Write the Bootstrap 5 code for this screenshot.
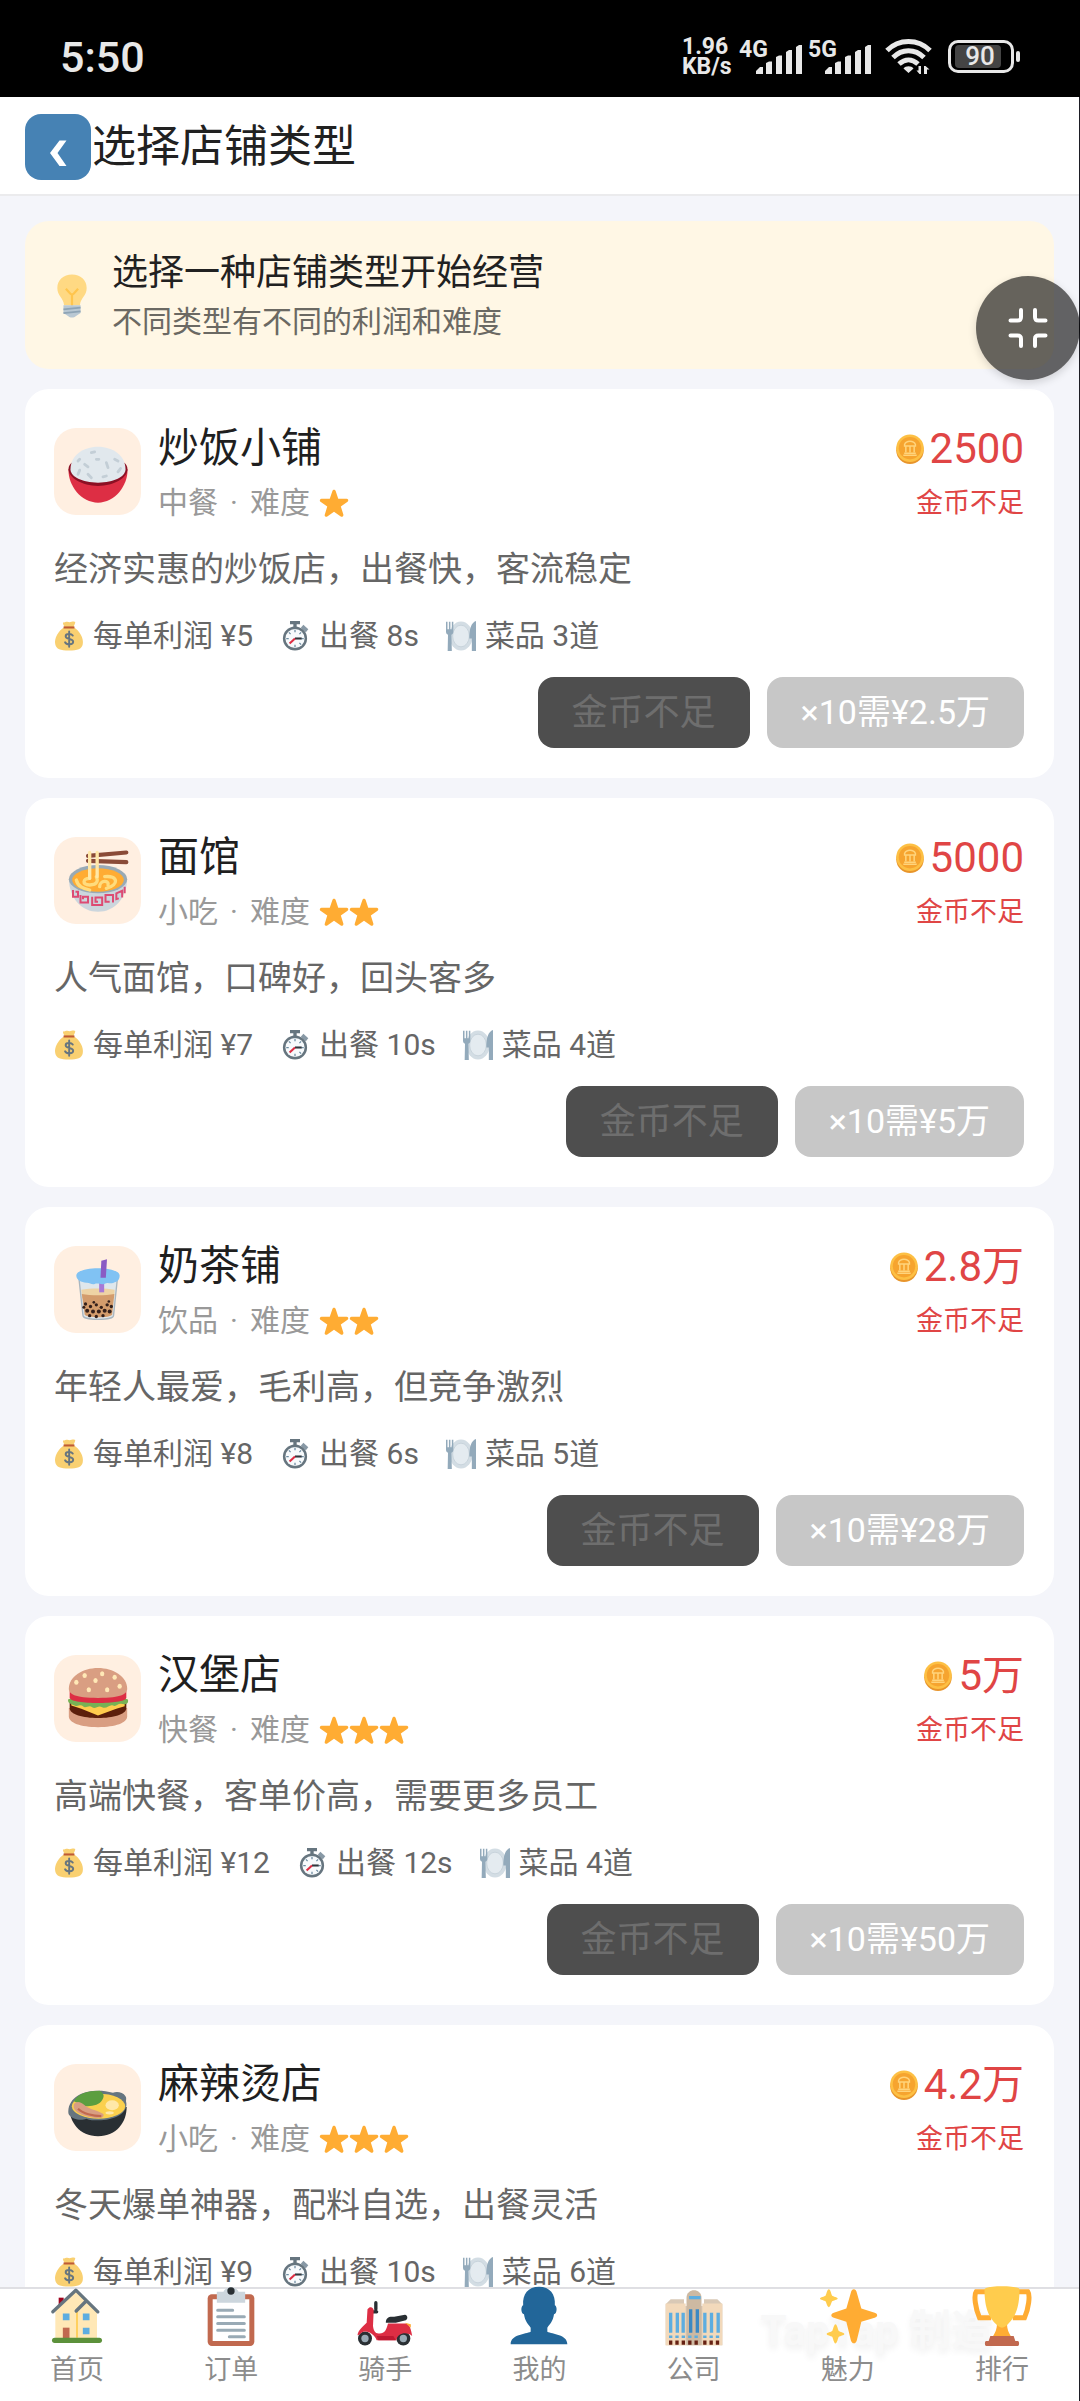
<!DOCTYPE html>
<html lang="zh-CN">
<head>
<meta charset="utf-8">
<meta name="viewport" content="width=device-width, initial-scale=1">
<title>选择店铺类型</title>
<link rel="stylesheet" href="https://cdn.jsdelivr.net/npm/bootstrap@5.3.0/dist/css/bootstrap.min.css">
<style>
  body { font-family: Roboto, "Noto Sans CJK SC", sans-serif; background: #f4f5fa; color: #212121; }
  .app-shell { overflow: hidden; }
  .app-body { border-right: 1px solid #1d1d24; min-height: 0; }
  .status-strip { height: 97px; background: #000; color: #e8e8e8; padding: 16px 60px 0; flex: none; }
  .clock { font-size: 43px; line-height: 48px; font-weight: 500; }
  .net-speed { font-size: 23px; line-height: 20px; font-weight: 700; width: 57px; }
  .net-kind { font-size: 23px; line-height: 22px; font-weight: 700; height: 36px; }
  .bars-icon { margin-left: -12px; width: 46px; height: 29px; margin-top: 6px; }
  .sig { width: 69px; }
  .battery-box { width: 66px; height: 33px; border: 3px solid #e8e8e8; border-radius: 10px; padding: 2px 10px 2px 4px; }
  .battery-fill { background: #444; border-radius: 4px; font-size: 26px; line-height: 23px; font-weight: 500; padding-left: 4px; }
  .battery-tip { width: 4px; height: 11px; background: #e8e8e8; border-radius: 2px; margin-left: 2px; }
  .title-bar { background: #fff; height: 99px; border-bottom: 2px solid #ebebed; padding: 3px 25px 0; flex: none; }
  .back-btn { width: 66px; height: 66px; border-radius: 16px; background: #4682b4; border: 0; padding: 0; }
  .page-title { font-size: 44px; line-height: 60px; font-weight: 400; margin: 0 0 0 1px; }
  .scroll-area { overflow-y: auto; scrollbar-width: none; padding: 25px 25px 20px; gap: 20px; min-height: 0; }
  .scroll-area::-webkit-scrollbar { display: none; }
  .tip-box { background: #fff7e5; border-radius: 24px; padding: 27px 25px 25px; gap: 18px; flex: none; }
  .tip-head { font-size: 36px; line-height: 50px; font-weight: 400; margin: 0 0 2px; }
  .tip-sub { font-size: 30px; line-height: 44px; color: #6b6963; margin: 0; }
  .shop { background: #fff; border-radius: 24px; padding: 30px 30px 30px 29px; flex: none; }
  .shop-icon { width: 87px; height: 87px; border-radius: 22px; background: #ffefe1; flex: none; }
  .shop-head { gap: 17px; }
  .shop-name { font-size: 41px; line-height: 58px; font-weight: 400; margin: 0 0 6px; color: #1f1f1f; }
  .shop-meta { font-size: 30px; line-height: 40px; color: #999; margin: 0; }
  .meta-dot { width: 32px; text-align: center; }
  .stars { margin-left: 9px; }
  .price { font-size: 42px; line-height: 60px; color: #e04545; gap: 5px; margin-bottom: 4px; }
  .short { font-size: 27px; line-height: 40px; color: #e04545; }
  .shop-desc { font-size: 34px; line-height: 44px; color: #666; margin: 24px 0 25px; }
  .stats { font-size: 30px; line-height: 40px; color: #666; gap: 27px; margin: 0 0 21px; padding: 0; list-style: none; }
  .stats li { gap: 9px; }
  .buttons { gap: 17px; }
  .buy { height: 71px; border: 0; border-radius: 16px; padding: 0 34px; }
  .buy-one { font-size: 36px; background: #4e4e4e; color: #6e6e6e; }
  .buy-ten { font-size: 34px; background: #c7c7c7; color: #fff; }
  .float-btn { position: absolute; right: 0; top: 276px; width: 104px; height: 104px; border: 0; border-radius: 50%; background: rgba(0,0,0,.6); box-shadow: 0 3px 8px rgba(0,0,0,.15); padding: 0; z-index: 5; }
  .tabs-bar { background: #fff; border-top: 2px solid #dfdfe3; height: 114px; flex: none; position: relative; }
  .tabs-bar a { flex: 1 1 0; color: #8c8c8c; font-size: 27px; line-height: 36px; text-decoration: none; position: relative; }
  .tabs-bar svg { margin-top: -3px; margin-bottom: 6px; }
  .stamp { position: absolute; right: 86px; top: 22px; font-size: 42px; line-height: 40px; font-weight: 700; color: #f8f8f8; text-shadow: 0 4px 7px #efefef; white-space: nowrap; }
  svg { flex: none; display: block; }
</style>
</head>
<body>
<svg width="0" height="0" class="position-absolute" aria-hidden="true">
  <symbol id="star" viewBox="0 0 36 36"><path fill="#ffac33" d="M27.3 34.6c-.4 0-.8-.1-1.200-.4L18 28.400l-8.100 5.800c-.7.500-1.600.500-2.300 0-.7-.5-1-1.400-.7-2.200l3-9.800-8.100-5.700c-.7-.5-1-1.400-.7-2.200.3-.8 1-1.300 1.900-1.300h9.900l3.300-9.600C16.400 2.600 17.200 2 18 2s1.600.5 1.900 1.300l3.200 9.600h10c.9 0 1.600.5 1.900 1.300.3.800 0 1.700-.7 2.200l-8.100 5.700 3 9.800c.3.800 0 1.700-.7 2.200-.4.400-.8.500-1.200.500z"/></symbol>
  <symbol id="coin" viewBox="0 0 36 36"><ellipse cx="18" cy="19.500" rx="16.500" ry="16.500" fill="#e8952b"/><ellipse cx="18" cy="17" rx="16.500" ry="16.500" fill="#fdc044"/><circle cx="18" cy="17" r="13.500" fill="#f6a42f"/><path d="M11.500 12.500c2-5 11-5 13 0v2h-13zM11 23h14M10 25.500h16M13 15v7M18 15v7M23 15v7" fill="none" stroke="#ffd47c" stroke-width="1.800"/></symbol>
  <symbol id="bag" viewBox="0 0 36 36"><path fill="#f9d071" d="M11 1.500c2 1 3-1 5-.5s3 .7 5 0 4-.7 4.500.3c0 2-1.500 4-2 6C31 12 36 21 34.500 28c-1.300 6-6 7.500-16.500 7.500S2.800 34 1.500 28C0 21 5 12 12.500 7.300 12 5 10 3 11 1.500z"/><path fill="#be5b35" d="M11.500 6.500h13v2.500h-13z"/><path d="M22.500 17.500c-1.500-2.500-8.500-3-8.500.7 0 4.300 9 2.300 9 6.800 0 4-8 3.800-9.700.5M18.200 12.500V31" fill="none" stroke="#67757f" stroke-width="2.300" stroke-linecap="round"/></symbol>
  <symbol id="watch" viewBox="0 0 36 36"><path fill="#66757f" d="M12 0h12v4H12zM16 3h4v5h-4z"/><path fill="#8899a6" d="M28 4.500L34 10l-3 3.500-6-5.500z"/><circle cx="18" cy="21" r="14.500" fill="#66757f"/><circle cx="18" cy="21" r="11.500" fill="#f7fafc"/><path d="M18 10.500v3M18 28.500v3M7.500 21h3M25.500 21h3M10.700 13.700l2 2M25.300 28.300l-2-2M25.300 13.700l-2 2" stroke="#6b8aa0" stroke-width="1.500"/><path d="M18 21h8" stroke="#31373d" stroke-width="2.500"/><path d="M18 21l-6.500 6" stroke="#dd2e44" stroke-width="2.500"/></symbol>
  <symbol id="plate" viewBox="0 0 36 36"><ellipse cx="18" cy="18" rx="14" ry="17.500" fill="#d3dde4"/><ellipse cx="18" cy="18" rx="10" ry="13" fill="#e4ebf0" stroke="#c4d0d9"/><path fill="#93aabb" d="M0 1h1.800v9H3.500V1h1.800v9H7V1h1.800v12c0 2-1 3-2.300 3.500L7 36H2l.4-19.500C1 16 0 15 0 13z"/><path fill="#93aabb" d="M36 0v36h-5V21h-3C28 10 30 2 36 0z"/></symbol>
  <symbol id="bulb" viewBox="0 0 36 36"><path fill="#ffd983" d="M30 11.500C30 5 25 .5 18 .5S6 5 6 11.500c0 6.500 5 8 5.500 14h13C25 19.500 30 18 30 11.500z"/><path d="M13 12l3.500 4c1 1 2 1 3 0l3.500-4M18 16.500V26" fill="none" stroke="#ffc54d" stroke-width="1.800"/><path fill="#b9c8d3" d="M11 25.500h14v6.500l-4 2.500c-1 1.500-5 1.500-6 0L11 32z"/><path d="M11 29l14-1.500M11 32l14-1.500" stroke="#8ea4b5" stroke-width="1.400"/></symbol>
</svg>

<div class="app-shell d-flex flex-column vh-100 position-relative">
  <div class="status-strip d-flex justify-content-between align-items-center">
    <div class="clock">5:50</div>
    <div class="d-flex align-items-center">
      <div class="net-speed">1.96<br>KB/s</div>
      <div class="sig d-flex align-items-start"><span class="net-kind">4G</span>
        <svg class="bars-icon" viewBox="0 0 46 29" fill="#e8e8e8"><path d="M0 29v-3l4-4h3v7zM10 29V18l3-1.500h3V29zM20 29V12l3-1.500h3V29zM30 29V7l3-2h3v24zM40 29V2l3-2h3v29z"/></svg></div>
      <div class="sig d-flex align-items-start"><span class="net-kind">5G</span>
        <svg class="bars-icon" viewBox="0 0 46 29" fill="#e8e8e8"><path d="M0 29v-3l4-4h3v7zM10 29V18l3-1.500h3V29zM20 29V12l3-1.500h3V29zM30 29V7l3-2h3v24zM40 29V2l3-2h3v29z"/></svg></div>
      <svg class="ms-2 me-3" width="47" height="37" viewBox="0 0 47 37"><g fill="none" stroke="#e8e8e8" stroke-width="5"><path d="M2 12.500C14 .5 33 .5 45 12.500"/><path d="M8 19.500c9-9 22-9 31 0"/><path d="M14 26c6-5.500 13-5.500 19 0"/></g><path fill="#e8e8e8" d="M23.500 35l-5-4.500c2-3 8-3 10 0zM36 28v8h-1.500l-3-3.500h2V28zM39 36v-8h1.500l4 3.500h-2.500V36z"/></svg>
      <div class="battery-box"><div class="battery-fill text-center">90</div></div><div class="battery-tip"></div>
    </div>
  </div>

  <div class="app-body d-flex flex-column flex-grow-1">
    <header class="title-bar d-flex align-items-center">
      <button type="button" class="back-btn d-flex align-items-center justify-content-center" aria-label="返回">
        <svg width="66" height="66" viewBox="0 0 66 66"><path d="M25 39l9.500-12.500h7L32.500 39l9 13h-7z" fill="#fff"/></svg>
      </button>
      <h1 class="page-title">选择店铺类型</h1>
    </header>

    <main class="scroll-area d-flex flex-column flex-grow-1">
      <section class="tip-box d-flex align-items-center">
        <svg width="44" height="44"><use href="#bulb"/></svg>
        <div><h2 class="tip-head">选择一种店铺类型开始经营</h2><p class="tip-sub">不同类型有不同的利润和难度</p></div>
      </section>

      <article class="shop">
        <div class="shop-head d-flex align-items-center">
          <div class="shop-icon d-flex align-items-center justify-content-center">
            <svg width="60" height="60" viewBox="0 0 36 36" overflow="visible"><path fill="#dd2e44" d="M.3 17C0 27 8 37 18 37s18-10 17.700-20z"/><path fill="#8c1024" d="M.3 17c0-2 1-3.500 2-4h31.400c1 .5 2 2 2 4 0 5-8 10-17.700 10S.3 22 .3 17z"/><path fill="#e1e8ed" d="M1.500 17C1.500 9 9 3.500 18 3.500S34.500 9 34.500 17c0 4.500-7 8-16.500 8s-16.500-3.500-16.500-8z"/><path d="M7 11l-1 1M17 11h1.500M10 14l2 1.500M23 13l1 3M28 11l2 1M6 20l1-2.500M12 20l2 2M21 21.500l2-.5M30 18.500l1.500-2M14 7l2-.5" stroke="#c3ced6" stroke-width="1.700" stroke-linecap="round"/></svg>
          </div>
          <div class="flex-grow-1"><h3 class="shop-name">炒饭小铺</h3>
            <p class="shop-meta d-flex align-items-center"><span>中餐</span><span class="meta-dot">·</span><span>难度</span><span class="stars d-flex" role="img" aria-label="1星"><svg width="30" height="30"><use href="#star"/></svg></span></p></div>
          <div class="text-end"><div class="price d-flex align-items-center justify-content-end"><svg width="30" height="30"><use href="#coin"/></svg><span>2500</span></div><div class="short">金币不足</div></div>
        </div>
        <p class="shop-desc">经济实惠的炒饭店，出餐快，客流稳定</p>
        <ul class="stats d-flex"><li class="d-flex align-items-center"><svg width="30" height="30"><use href="#bag"/></svg>每单利润 ¥5</li><li class="d-flex align-items-center"><svg width="30" height="30"><use href="#watch"/></svg>出餐 8s</li><li class="d-flex align-items-center"><svg width="30" height="30"><use href="#plate"/></svg>菜品 3道</li></ul>
        <div class="buttons d-flex justify-content-end"><button type="button" class="buy buy-one">金币不足</button><button type="button" class="buy buy-ten">×10需¥2.5万</button></div>
      </article>

      <article class="shop">
        <div class="shop-head d-flex align-items-center">
          <div class="shop-icon d-flex align-items-center justify-content-center">
            <svg width="60" height="60" viewBox="0 0 36 36" overflow="visible"><path fill="#ccd6dd" d="M.5 17.500C1 29 8 37 18 37s17-8 17.500-19.500z"/><ellipse cx="18" cy="17.500" rx="17.500" ry="8.500" fill="#99aab5"/><ellipse cx="18" cy="18" rx="15.500" ry="7" fill="#ffac33"/><g fill="none" stroke="#ffdc7d" stroke-width="2" stroke-linecap="round"><path d="M13 17c-4 0-5 4 0 4s5-3 4-5M5 18c1 4 4 5 8 6M19 22c0-4 6-4 5-1M22 16c8-1 9 5 1 7"/></g><g stroke="#8a4b38" stroke-width="2.500" stroke-linecap="round"><path d="M12 3.500l23-2M12 6.500l23 .8"/></g><path d="M13 1.500V17M17.500 1.500V16" stroke="#ffe8a8" stroke-width="2" stroke-linecap="round"/><g fill="none" stroke="#dd4b73" stroke-width="1.200"><path d="M3 24v4h3v-3H4.500M7.500 27v4.500H12V28H9v1.500M14.500 28v5h6v-4.500h-4V31H18M27 31.500V27h-4.500v4H25M32.500 28.500V24.500L29 26v3.500l1.500-.5M34 22v4"/></g></svg>
          </div>
          <div class="flex-grow-1"><h3 class="shop-name">面馆</h3>
            <p class="shop-meta d-flex align-items-center"><span>小吃</span><span class="meta-dot">·</span><span>难度</span><span class="stars d-flex" role="img" aria-label="2星"><svg width="30" height="30"><use href="#star"/></svg><svg width="30" height="30"><use href="#star"/></svg></span></p></div>
          <div class="text-end"><div class="price d-flex align-items-center justify-content-end"><svg width="30" height="30"><use href="#coin"/></svg><span>5000</span></div><div class="short">金币不足</div></div>
        </div>
        <p class="shop-desc">人气面馆，口碑好，回头客多</p>
        <ul class="stats d-flex"><li class="d-flex align-items-center"><svg width="30" height="30"><use href="#bag"/></svg>每单利润 ¥7</li><li class="d-flex align-items-center"><svg width="30" height="30"><use href="#watch"/></svg>出餐 10s</li><li class="d-flex align-items-center"><svg width="30" height="30"><use href="#plate"/></svg>菜品 4道</li></ul>
        <div class="buttons d-flex justify-content-end"><button type="button" class="buy buy-one">金币不足</button><button type="button" class="buy buy-ten">×10需¥5万</button></div>
      </article>

      <article class="shop">
        <div class="shop-head d-flex align-items-center">
          <div class="shop-icon d-flex align-items-center justify-content-center">
            <svg width="60" height="60" viewBox="0 0 36 36" overflow="visible"><path fill="#dfe7ec" stroke="#a9b6bf" stroke-width=".8" d="M6.500 11h23.200L27.300 34c-.3 3-18 3-18.300 0z"/><path fill="#eed3a4" d="M8 18.500c5-1 15-1 20 0l-.3 5H8.500z"/><path fill="#d39c6c" d="M8.300 21c5 1 14.500 1 19.500 0L26.500 33.500c-1 2-15.500 2-16.500 0z"/><g fill="#34201b"><circle cx="10.500" cy="27" r="1"/><circle cx="13.500" cy="28.500" r="1"/><circle cx="17" cy="27.500" r="1"/><circle cx="20" cy="29" r="1"/><circle cx="23.500" cy="27.500" r="1"/><circle cx="26" cy="28.500" r="1"/><circle cx="11.500" cy="31" r="1.200"/><circle cx="15" cy="31.500" r="1.200"/><circle cx="18.500" cy="31.500" r="1.200"/><circle cx="22" cy="31" r="1.200"/><circle cx="25" cy="31.500" r="1.200"/><circle cx="13" cy="34" r="1"/><circle cx="17" cy="34.500" r="1"/><circle cx="21" cy="34" r="1"/><circle cx="9.500" cy="29" r=".9"/><circle cx="24.500" cy="25.500" r=".8"/><circle cx="15.500" cy="26" r=".8"/></g><path fill="#a779d6" d="M18.700 12h3v8h-3z"/><path fill="#80c2f3" d="M5 10c0-6 26-6 26 0 0 2-1 3.500-3 4-2 1.500-4-.5-6 .8-2 1-4-.8-6 .2-2 .5-3-1-5-.8-3-.2-6-1.700-6-4.200z"/><path fill="#8a5bc4" d="M20 1l3.400-.8-.7 11h-3.200z"/></svg>
          </div>
          <div class="flex-grow-1"><h3 class="shop-name">奶茶铺</h3>
            <p class="shop-meta d-flex align-items-center"><span>饮品</span><span class="meta-dot">·</span><span>难度</span><span class="stars d-flex" role="img" aria-label="2星"><svg width="30" height="30"><use href="#star"/></svg><svg width="30" height="30"><use href="#star"/></svg></span></p></div>
          <div class="text-end"><div class="price d-flex align-items-center justify-content-end"><svg width="30" height="30"><use href="#coin"/></svg><span>2.8万</span></div><div class="short">金币不足</div></div>
        </div>
        <p class="shop-desc">年轻人最爱，毛利高，但竞争激烈</p>
        <ul class="stats d-flex"><li class="d-flex align-items-center"><svg width="30" height="30"><use href="#bag"/></svg>每单利润 ¥8</li><li class="d-flex align-items-center"><svg width="30" height="30"><use href="#watch"/></svg>出餐 6s</li><li class="d-flex align-items-center"><svg width="30" height="30"><use href="#plate"/></svg>菜品 5道</li></ul>
        <div class="buttons d-flex justify-content-end"><button type="button" class="buy buy-one">金币不足</button><button type="button" class="buy buy-ten">×10需¥28万</button></div>
      </article>

      <article class="shop">
        <div class="shop-head d-flex align-items-center">
          <div class="shop-icon d-flex align-items-center justify-content-center">
            <svg width="60" height="60" viewBox="0 0 36 36" overflow="visible"><path fill="#d99e82" d="M.5 24h35v5c0 4-7 6.500-17.500 6.500S.5 33 .5 29z"/><path fill="#5c1f0b" d="M1 20h34v4c0 4-8 6-17 6S1 28 1 24z"/><path fill="#ffcc4d" d="M2 20l32 0v3l-5 1.500-11 4-10-4-6-2z"/><path fill="#77b255" d="M0 19c0-2 36-2 36 0 .5 3-2 3-4 2.500s-3 2-5 1-4 2.500-6.500 1-4 1.500-6 0-4 1-5.500-.5-3 .5-5-.5-4-1-4-3.500z"/><path fill="#dd2e44" d="M1 14h34v4c-1 4-33 4-34 0z"/><path fill="#d99e82" d="M.5 12.500C.5 5 9 0 18 0s17.500 5 17.500 12.500c0 3-3 5.500-17.500 5.500S.5 15.500.5 12.500z"/><g fill="#ffe8b6"><ellipse cx="5" cy="8.500" rx="1.300" ry="1.500"/><ellipse cx="10" cy="4.500" rx="1.300" ry="1.500"/><ellipse cx="16.500" cy="7.500" rx="1.300" ry="1.500"/><ellipse cx="20.500" cy="3.500" rx="1.300" ry="1.500"/><ellipse cx="28" cy="5.500" rx="1.300" ry="1.500"/><ellipse cx="31" cy="11" rx="1.300" ry="1.500"/><ellipse cx="23.500" cy="13" rx="1.300" ry="1.500"/><ellipse cx="12.500" cy="13" rx="1.300" ry="1.500"/></g></svg>
          </div>
          <div class="flex-grow-1"><h3 class="shop-name">汉堡店</h3>
            <p class="shop-meta d-flex align-items-center"><span>快餐</span><span class="meta-dot">·</span><span>难度</span><span class="stars d-flex" role="img" aria-label="3星"><svg width="30" height="30"><use href="#star"/></svg><svg width="30" height="30"><use href="#star"/></svg><svg width="30" height="30"><use href="#star"/></svg></span></p></div>
          <div class="text-end"><div class="price d-flex align-items-center justify-content-end"><svg width="30" height="30"><use href="#coin"/></svg><span>5万</span></div><div class="short">金币不足</div></div>
        </div>
        <p class="shop-desc">高端快餐，客单价高，需要更多员工</p>
        <ul class="stats d-flex"><li class="d-flex align-items-center"><svg width="30" height="30"><use href="#bag"/></svg>每单利润 ¥12</li><li class="d-flex align-items-center"><svg width="30" height="30"><use href="#watch"/></svg>出餐 12s</li><li class="d-flex align-items-center"><svg width="30" height="30"><use href="#plate"/></svg>菜品 4道</li></ul>
        <div class="buttons d-flex justify-content-end"><button type="button" class="buy buy-one">金币不足</button><button type="button" class="buy buy-ten">×10需¥50万</button></div>
      </article>

      <article class="shop">
        <div class="shop-head d-flex align-items-center">
          <div class="shop-icon d-flex align-items-center justify-content-center">
            <svg width="60" height="60" viewBox="0 0 36 36" overflow="visible"><path fill="#292f33" d="M.8 18h34.400c0 9-6 17.500-17.200 17.500S.8 27 .8 18z"/><path fill="#66757f" d="M.3 19C2 11 10 8.200 18 8.200c3 0 6 .3 9 1.300 2-1 6-.5 7.500 2 .7 1 .3 2 .3 3 2 7-7 11.500-16.800 11.500-2.500 0-5 0-7-1-3 1.500-8.500.5-10.500-2.500C0 21.500.2 20 .3 19z"/><ellipse cx="18.300" cy="17.500" rx="16" ry="7.500" fill="#fbd04e"/><path fill="#5c9e3f" d="M3.500 14.500C6 10 12 8.300 19 8.300c3 1.500 3 4 1 6.200-2 2.500-6 3-9.500 3z"/><path fill="#d99e82" d="M3.500 16.500C5 14 8 15 10 17s7 3 11 5c1 1 0 2.500-2 2.500-4 .5-17-2-15.500-8z"/><path d="M6 19c3 3 9 4.500 14 4.500" fill="none" stroke="#c1694f" stroke-width="1.300"/><ellipse cx="26.500" cy="17" rx="4" ry="3" fill="#ffe8a8"/><ellipse cx="25" cy="21.500" rx="2.500" ry="1" fill="#ffe8a8"/></svg>
          </div>
          <div class="flex-grow-1"><h3 class="shop-name">麻辣烫店</h3>
            <p class="shop-meta d-flex align-items-center"><span>小吃</span><span class="meta-dot">·</span><span>难度</span><span class="stars d-flex" role="img" aria-label="3星"><svg width="30" height="30"><use href="#star"/></svg><svg width="30" height="30"><use href="#star"/></svg><svg width="30" height="30"><use href="#star"/></svg></span></p></div>
          <div class="text-end"><div class="price d-flex align-items-center justify-content-end"><svg width="30" height="30"><use href="#coin"/></svg><span>4.2万</span></div><div class="short">金币不足</div></div>
        </div>
        <p class="shop-desc">冬天爆单神器，配料自选，出餐灵活</p>
        <ul class="stats d-flex mb-0"><li class="d-flex align-items-center"><svg width="30" height="30"><use href="#bag"/></svg>每单利润 ¥9</li><li class="d-flex align-items-center"><svg width="30" height="30"><use href="#watch"/></svg>出餐 10s</li><li class="d-flex align-items-center"><svg width="30" height="30"><use href="#plate"/></svg>菜品 6道</li></ul>
      </article>
    </main>

    <nav class="tabs-bar d-flex">
      <span class="stamp" aria-hidden="true">TapTap 制造</span>
      <a href="#" class="d-flex flex-column align-items-center"><svg width="60" height="60" viewBox="0 0 36 36"><path fill="#a0041e" d="M7 7h3v8H7z"/><path fill="#ffe8b6" d="M5 14L17 3l13 12v17H5z"/><path fill="#ffcc4d" d="M17.500 15h1v16h-1z"/><path d="M3.500 15.500L17.300 2.500l13.200 13M17.500 15l6-6" fill="none" stroke="#66757f" stroke-width="2" stroke-linecap="round" stroke-linejoin="round"/><path fill="#5dade0" d="M9.500 16.500h4v4h-4zM21.500 16.500h4v4h-4zM21.500 25h4v4h-4z"/><path fill="#c1694f" d="M9.500 25h4v7h-4z"/><rect x="3" y="31" width="30" height="3.200" rx="1.600" fill="#5c913b"/></svg>首页</a>
      <a href="#" class="d-flex flex-column align-items-center"><svg width="60" height="60" viewBox="0 0 36 36"><rect x="4" y="5" width="28" height="31" rx="2.500" fill="#c1694f"/><path fill="#fff" d="M7 8h22v25H7z"/><path fill="#ccd6dd" d="M9.500 3.500h4C14.500 0 21.500 0 22.500 3.500h4V10h-17z"/><circle cx="18" cy="3" r="2.200" fill="#292f33"/><path d="M10 14.500h9M10 18.500h16M10 22.500h16M10 26.500h16M17 30.500h9" stroke="#99aab5" stroke-width="1.800" stroke-linecap="round"/></svg>订单</a>
      <a href="#" class="d-flex flex-column align-items-center"><svg width="60" height="60" viewBox="0 0 36 36"><circle cx="6" cy="31.500" r="4.200" fill="#292f33"/><circle cx="6" cy="31.500" r="2.200" fill="#99aab5"/><circle cx="29" cy="31.500" r="4.200" fill="#292f33"/><circle cx="29" cy="31.500" r="2.200" fill="#99aab5"/><path d="M10 15.500h3M12.500 10v4" stroke="#292f33" stroke-width="2" stroke-linecap="round"/><path fill="#dd2e44" d="M7.500 14c1.500-2.500 4-1 3.700 1L10.800 24c.5 4 2 4.500 4 4.500 3 0 4-2 5-6h11c2 .5 3 4 3.500 7.500-3-3-9-2-9.500 2.500H13c-1-3-5-6-8-5-1.500.5-2 2-3.500 2 .3-3 3-5 5.500-7.500z"/><path fill="#be1931" d="M13 30h10l1.500 2.500H14z"/><path fill="#292f33" d="M18.500 22c0-3 2-4 5-3.500l6.500-1.200c1.500 0 2 2.500.5 3.200l-6 1.500z"/><path fill="#ffac33" d="M30 22l3.500 1v2z"/></svg>骑手</a>
      <a href="#" class="d-flex flex-column align-items-center"><svg width="60" height="60" viewBox="0 0 36 36"><path fill="#226699" d="M18 .5c6.500 0 10 4.500 9.500 11 1.500.5 1.500 5-.5 5.500-.5 4-2.500 6-4 8v2.500C26 29 35 29 35 35v0H1c0-6 9-6 12-7.500V25c-1.500-2-3.500-4-4-8-2-.5-2-5-.5-5.500C8 5 11.500.5 18 .5z"/></svg>我的</a>
      <a href="#" class="d-flex flex-column align-items-center"><svg width="60" height="60" viewBox="0 0 36 36"><path fill="#d9c9b6" d="M1 11l3-3h8v4h12V8h8l3 3v24.500H1z"/><path fill="#f2d9bb" d="M1 10.500h12v25H1zM23 10.500h12v25H23z"/><path fill="#cdb9a2" d="M13.500 7c0-6 9-6 9 0v28.500h-9z"/><path d="M4 16v12M8 16v12M11.500 16v12M24.500 16v12M28.500 16v12M32.500 16v12M15 7h7" stroke="#5dade0" stroke-width="2"/><path d="M16 14v14M20 14v14" stroke="#3b88c3" stroke-width="2"/><path d="M3 30.500h10M14.500 30.500h7M23.500 30.500h10" stroke="#5dade0" stroke-width="1.500" stroke-dasharray="2 1.800"/><path d="M3 34h10M14.500 34h7M23.500 34h10" stroke="#662113" stroke-width="2.500" stroke-dasharray="2 1.800"/></svg>公司</a>
      <a href="#" class="d-flex flex-column align-items-center"><svg width="60" height="60" viewBox="0 0 36 36"><path fill="#ffac33" d="M21.500 2c1 0 1.500 1 1.800 2L26 13.500l8 2.500c2 .7 2 2.300 0 3l-8 2.500-2.700 11c-.5 2.500-3 2.500-3.600 0l-2.700-11-7.500-2.500c-2-.7-2-2.300 0-3l7.500-2.500L19.700 4c.3-1 .8-2 1.800-2z"/><path fill="#ffcc4d" d="M6.500 2c1 0 1.500 3.300 2 3.800s3.300.9 3.300 1.700-2.800 1.200-3.300 1.700-1 3.500-2 3.500-1.500-3-2-3.500-3.300-.9-3.300-1.700 2.800-1.200 3.300-1.700 1-3.800 2-3.800zM10.500 23c1 0 1.500 3.500 2 4s3.300 1 3.300 1.800-2.800 1.200-3.300 1.700-1 4-2 4-1.500-3.500-2-4-3.300-.9-3.300-1.700 2.800-1.300 3.300-1.800 1-4 2-4z"/></svg>魅力</a>
      <a href="#" class="d-flex flex-column align-items-center"><svg width="60" height="60" viewBox="0 0 36 36"><path d="M8.500 3.500H2.500c-1.500 2-.5 10 2 15.500h7M27.500 3.500h6c1.500 2 .5 10-2 15.500h-7" fill="none" stroke="#ffac33" stroke-width="3"/><path fill="#ffac33" d="M15 22h6c0 4 1 6 3 9H12c2-3 3-5 3-9z"/><path fill="#ffcc4d" d="M7.500 2c0-2.500 21-2.500 21 0 0 12-3 17-7 21-1 1-2 2-3.500 2s-2.500-1-3.500-2c-4-4-7-9-7-21z"/><path fill="#c1694f" d="M11 30h14l1 3h1.500c1 0 1 3 0 3h-19c-1 0-1-3 0-3H10z"/></svg>排行</a>
    </nav>
  </div>

  <button type="button" class="float-btn d-flex align-items-center justify-content-center" aria-label="退出全屏">
    <svg width="40" height="42" viewBox="0 0 40 42" fill="none" stroke="#fff" stroke-width="4" stroke-linecap="round"><path d="M2.500 13.500h7c3 0 3.500-1 3.500-3.500V3M37.500 13.500h-7c-3 0-3.500-1-3.500-3.500V3M2.500 28.500h7c3 0 3.500 1 3.500 3.500v7M37.500 28.500h-7c-3 0-3.500 1-3.500 3.500v7"/></svg>
  </button>
</div>
<script src="https://cdn.jsdelivr.net/npm/bootstrap@5.3.0/dist/js/bootstrap.bundle.min.js"></script>
</body>
</html>
